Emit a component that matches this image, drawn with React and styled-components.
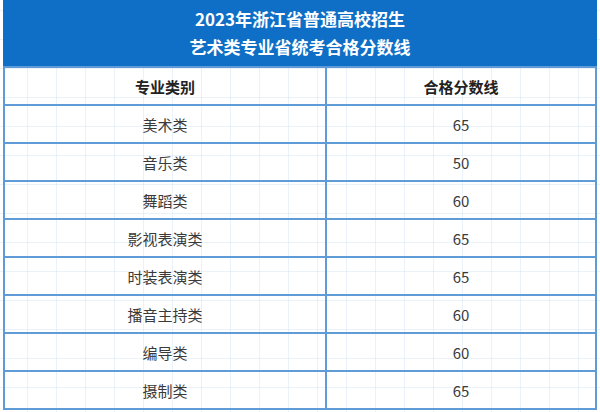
import React from "react";
import styled, { createGlobalStyle } from "styled-components";

const GlobalStyle = createGlobalStyle`
  html, body {
    margin: 0;
    padding: 0;
    background-color: #fff;
    background-image:
      linear-gradient(to right, rgba(215, 228, 242, 0.5) 1px, transparent 1px),
      linear-gradient(to bottom, rgba(215, 228, 242, 0.5) 1px, transparent 1px);
    background-size: 29px 29px;
    background-position: -2px 10px;
    font-family: "Noto Sans CJK SC", "Noto Sans", sans-serif;
  }
`;

const Wrap = styled.div`
  width: 600px;
  height: 412px;
  padding: 0 3px;
  box-sizing: border-box;
`;

const Banner = styled.div`
  height: 66px;
  background: #0f6fc6;
  color: #fff;
  font-weight: 700;
  font-size: 17px;
  line-height: 28px;
  text-align: center;
  padding-top: 5px;
  box-sizing: border-box;
`;

const Table = styled.table`
  width: 100%;
  border-collapse: collapse;
  table-layout: fixed;
`;

const Cell = styled.td`
  height: 36px;
  padding: 0;
  border: 2px solid #5f9bd6;
  text-align: center;
  font-size: 15px;
  color: ${(p) => (p.$head ? "#222" : "#3a3a3a")};
  font-weight: ${(p) => (p.$head ? 700 : 400)};
  background: transparent;
`;

const rows = [
  ["美术类", "65"],
  ["音乐类", "50"],
  ["舞蹈类", "60"],
  ["影视表演类", "65"],
  ["时装表演类", "65"],
  ["播音主持类", "60"],
  ["编导类", "60"],
  ["摄制类", "65"],
];

export default function App() {
  return (
    <>
      <GlobalStyle />
      <Wrap>
        <Banner>
          <div>2023年浙江省普通高校招生</div>
          <div>艺术类专业省统考合格分数线</div>
        </Banner>
        <Table>
          <colgroup>
            <col style={{ width: "322px" }} />
            <col />
          </colgroup>
          <tbody>
            <tr>
              <Cell $head>专业类别</Cell>
              <Cell $head>合格分数线</Cell>
            </tr>
            {rows.map(([name, score]) => (
              <tr key={name}>
                <Cell>{name}</Cell>
                <Cell>{score}</Cell>
              </tr>
            ))}
          </tbody>
        </Table>
      </Wrap>
    </>
  );
}
